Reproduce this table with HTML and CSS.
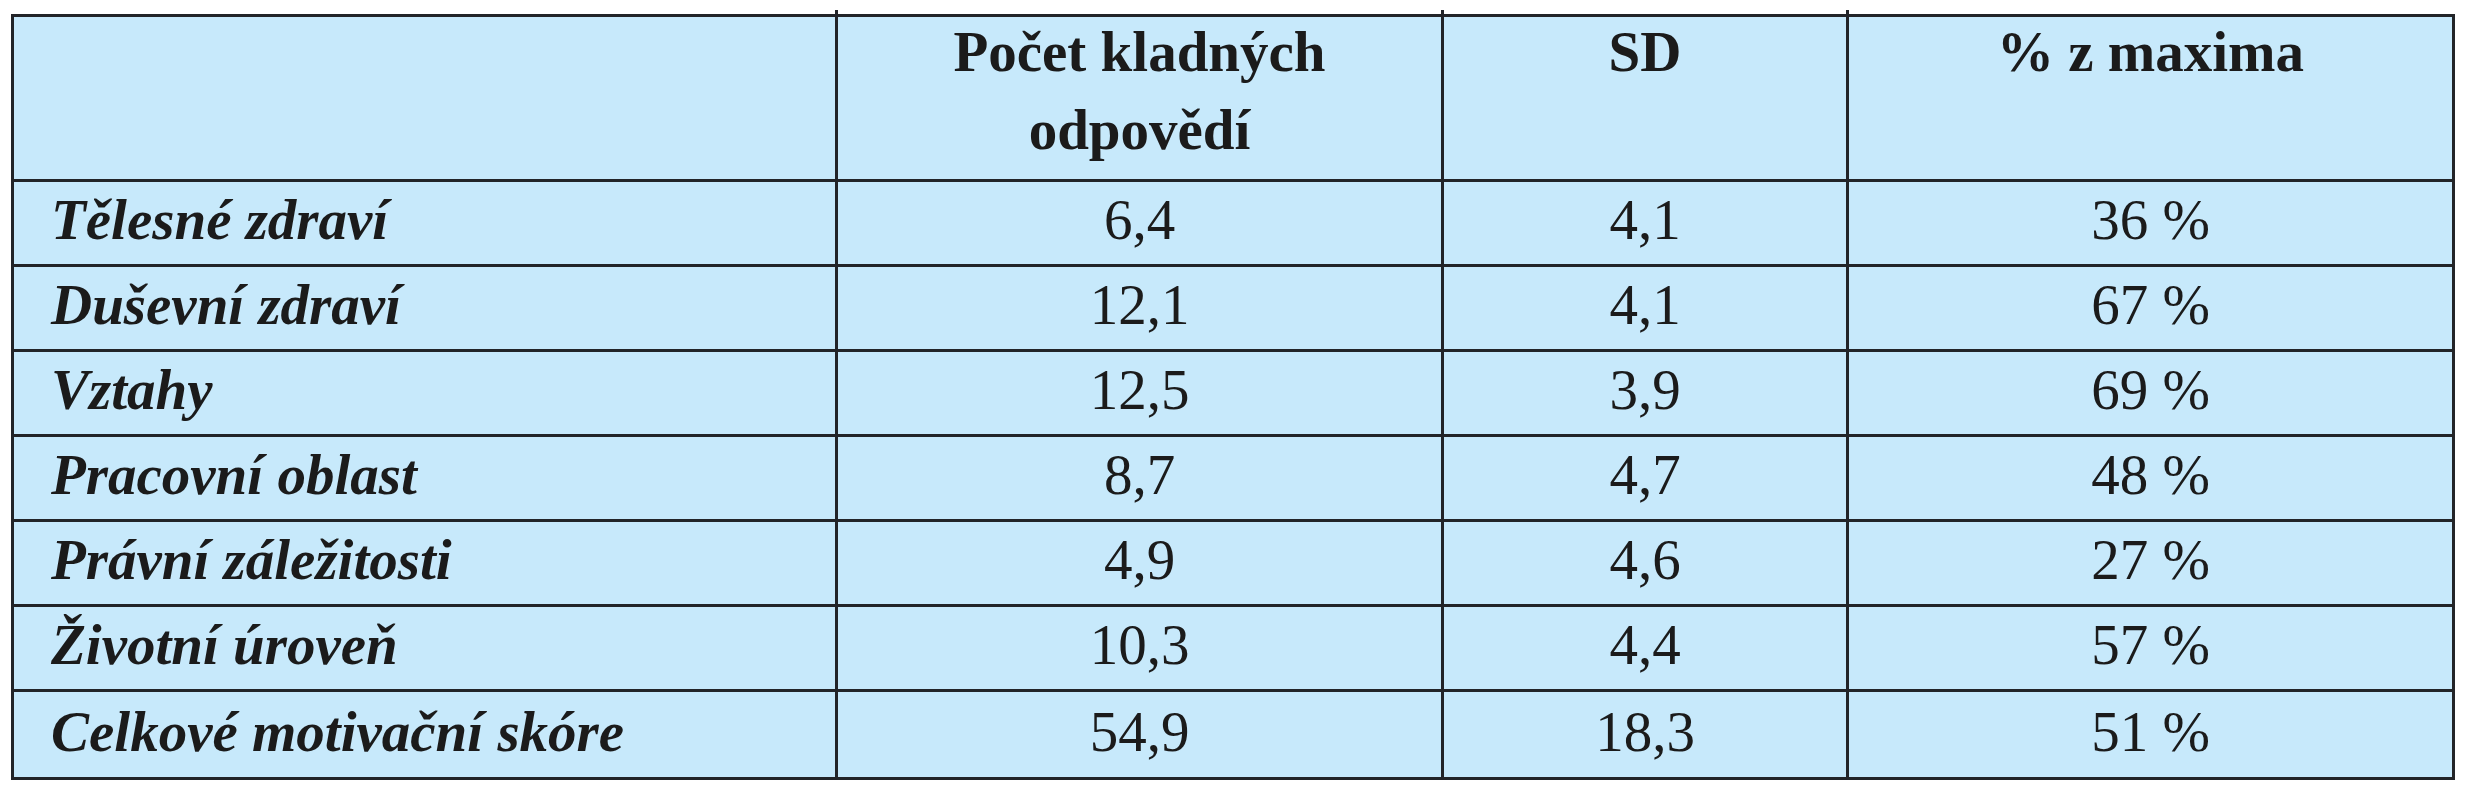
FILE: index.html
```html
<!DOCTYPE html>
<html lang="cs">
<head>
<meta charset="utf-8">
<title>Motivační skóre</title>
<link rel="stylesheet" href="styles.css">
</head>
<body>
<table class="data">
  <colgroup>
    <col class="c-label">
    <col class="c-count">
    <col class="c-sd">
    <col class="c-pct">
  </colgroup>
  <thead>
    <tr class="head">
      <th class="blank"></th>
      <th class="tick"><div class="hd">Počet kladných<br>odpovědí</div></th>
      <th class="tick"><div class="hd">SD</div></th>
      <th class="tick"><div class="hd">% z maxima</div></th>
    </tr>
  </thead>
  <tbody>
    <tr><td class="label">Tělesné zdraví</td><td>6,4</td><td>4,1</td><td>36 %</td></tr>
    <tr><td class="label">Duševní zdraví</td><td>12,1</td><td>4,1</td><td>67 %</td></tr>
    <tr><td class="label">Vztahy</td><td>12,5</td><td>3,9</td><td>69 %</td></tr>
    <tr><td class="label">Pracovní oblast</td><td>8,7</td><td>4,7</td><td>48 %</td></tr>
    <tr><td class="label">Právní záležitosti</td><td>4,9</td><td>4,6</td><td>27 %</td></tr>
    <tr><td class="label">Životní úroveň</td><td>10,3</td><td>4,4</td><td>57 %</td></tr>
    <tr class="last"><td class="label">Celkové motivační skóre</td><td class="tick-b">54,9</td><td class="tick-b">18,3</td><td class="tick-b">51 %</td></tr>
  </tbody>
</table>
</body>
</html>
```

FILE: styles.css
```css
html, body {
  margin: 0;
  padding: 0;
  background: #ffffff;
}

body {
  padding: 14px 0 0 11px;
  font-family: "Liberation Serif", "Times New Roman", serif;
  color: #1b1b1b;
}

.data {
  width: 2441px;
  table-layout: fixed;
  border-collapse: collapse;
  background: #c7e9fb;
  border: 3px solid #222428;
  font-size: 57px;
}

.c-label { width: 824px; }
.c-count { width: 606px; }
.c-sd { width: 405px; }
.c-pct { width: 606px; }

.data th,
.data td {
  border: 3px solid #222428;
  padding: 0;
  position: relative;
}

.head {
  height: 165px;
}

.head th {
  vertical-align: top;
  font-weight: bold;
  line-height: 78px;
  padding: 0;
  text-align: center;
}

.hd {
  margin-top: -4px;
}

.data tbody tr {
  height: 85px;
}

.data tbody tr.last {
  height: 88px;
}

.data td {
  text-align: center;
  vertical-align: middle;
  line-height: 66px;
  padding-bottom: 6px;
}

.data td.label {
  text-align: left;
  font-weight: bold;
  font-style: italic;
  padding-left: 37px;
}

.tick::before {
  content: "";
  position: absolute;
  left: -3px;
  top: -7px;
  width: 3px;
  height: 5px;
  background: #222428;
}

.tick-b::after {
  content: "";
  position: absolute;
  left: -3px;
  bottom: -7px;
  width: 3px;
  height: 5px;
  background: #222428;
}
```
